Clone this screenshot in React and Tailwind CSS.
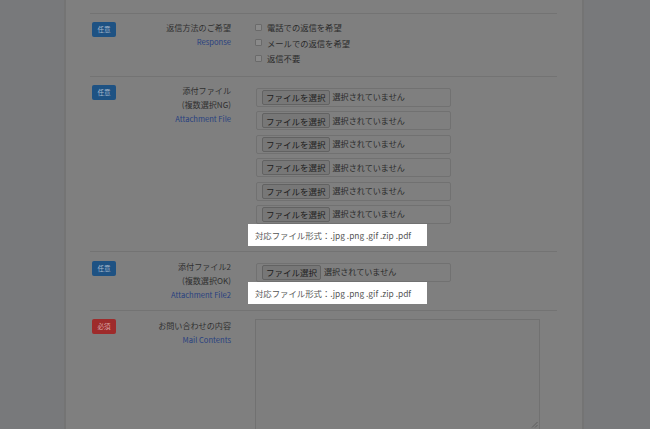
import React from "react";

const FONT = { fontFamily: '"Noto Sans CJK JP", "Noto Sans", sans-serif' };

function Badge({ req }) {
  return req ? (
    <div className="w-[24px] h-[15px] rounded-[2px] flex items-center justify-center text-[6.5px] leading-none bg-[#9e2b2b] text-[#d8a8a8]">
      必須
    </div>
  ) : (
    <div className="w-[24px] h-[15px] rounded-[2px] flex items-center justify-center text-[6.5px] leading-none bg-[#1e5283] text-[#a7b8cb]">
      任意
    </div>
  );
}

function FileInput({ label }) {
  return (
    <div className="w-[195px] h-[19px] border border-[#717171] rounded-[2px] flex items-center pl-[5px] shrink-0">
      <div className="h-[15px] px-[3px] border border-[#626262] bg-[#777777] rounded-[2px] flex items-center text-[#1c1c1c] leading-none text-[8.5px]">
        {label}
      </div>
      <span className="ml-[3px] text-[#2b2b2b] leading-none">選択されていません</span>
    </div>
  );
}

function Note() {
  return (
    <div className="-ml-[8px] w-[179px] h-[22px] bg-white flex items-center pl-[7px] text-[#555555] leading-none whitespace-nowrap text-[8.4px]">
      対応ファイル形式：.jpg .png .gif .zip .pdf
    </div>
  );
}

function Check({ children }) {
  return (
    <div className="flex items-center h-[15.5px]">
      <div className="w-[7px] h-[7px] border border-[#6a6a6a] bg-[#8a8a8a] rounded-[1px]" />
      <span className="ml-[5px] text-[#2b2b2b] text-[8.3px]">{children}</span>
    </div>
  );
}

export default function App() {
  return (
    <div style={FONT} className="w-[650px] h-[429px] overflow-hidden bg-[#78797b] text-[8.1px]">
      <div className="ml-[64px] w-[520px] h-full bg-[#7f7f7f] border-l-[2px] border-r-[2px] border-[#747474] pl-[24px] pr-[25px] pt-[13px]">
        {/* Row 1 */}
        <div className="flex h-[63px] border-t border-[#737373] pl-[2px]">
          <div className="w-[24px] pt-[8px]">
            <Badge />
          </div>
          <div className="w-[115px] text-right leading-[14px] pt-[7px]">
            <div className="text-[#2f2f2f]">返信方法のご希望</div>
            <div className="text-[#283f80] text-[7.6px]">Response</div>
          </div>
          <div className="ml-[24px] pt-[5.5px]">
            <Check>電話での返信を希望</Check>
            <Check>メールでの返信を希望</Check>
            <Check>返信不要</Check>
          </div>
        </div>
        {/* Row 2 */}
        <div className="flex h-[175px] border-t border-[#737373] pl-[2px]">
          <div className="w-[24px] pt-[8px]">
            <Badge />
          </div>
          <div className="w-[115px] text-right leading-[14px] pt-[7px]">
            <div className="text-[#2f2f2f]">添付ファイル</div>
            <div className="text-[#2f2f2f]">(複数選択NG)</div>
            <div className="text-[#283f80] text-[7.6px]">Attachment File</div>
          </div>
          <div className="ml-[25px] pt-[11px] flex flex-col gap-[4.4px]">
            <FileInput label="ファイルを選択" />
            <FileInput label="ファイルを選択" />
            <FileInput label="ファイルを選択" />
            <FileInput label="ファイルを選択" />
            <FileInput label="ファイルを選択" />
            <div className="flex flex-col">
              <FileInput label="ファイルを選択" />
              <Note />
            </div>
          </div>
        </div>
        {/* Row 3 */}
        <div className="flex h-[59px] border-t border-[#737373] pl-[2px]">
          <div className="w-[24px] pt-[9px]">
            <Badge />
          </div>
          <div className="w-[115px] text-right leading-[14px] pt-[8px]">
            <div className="text-[#2f2f2f]">添付ファイル2</div>
            <div className="text-[#2f2f2f]">(複数選択OK)</div>
            <div className="text-[#283f80] text-[7.6px]">Attachment File2</div>
          </div>
          <div className="ml-[25px] pt-[11px] flex flex-col">
            <FileInput label="ファイル選択" />
            <Note />
          </div>
        </div>
        {/* Row 4 */}
        <div className="flex h-[130px] border-t border-[#737373] pl-[2px]">
          <div className="w-[24px] pt-[8px]">
            <Badge req />
          </div>
          <div className="w-[115px] text-right leading-[14px] pt-[8px]">
            <div className="text-[#2f2f2f]">お問い合わせの内容</div>
            <div className="text-[#283f80] text-[7.6px]">Mail Contents</div>
          </div>
          <div className="ml-[24px] pt-[8px]">
            <div className="relative w-[285px] h-[111px] border border-[#717171] bg-[#7e7e7e]">
              <svg className="absolute right-[1px] bottom-[1px]" width="7" height="7" viewBox="0 0 7 7">
                <path d="M6.5 1 L1 6.5 M6.5 4 L4 6.5" stroke="#555" strokeWidth="0.8" />
              </svg>
            </div>
          </div>
        </div>
      </div>
    </div>
  );
}
